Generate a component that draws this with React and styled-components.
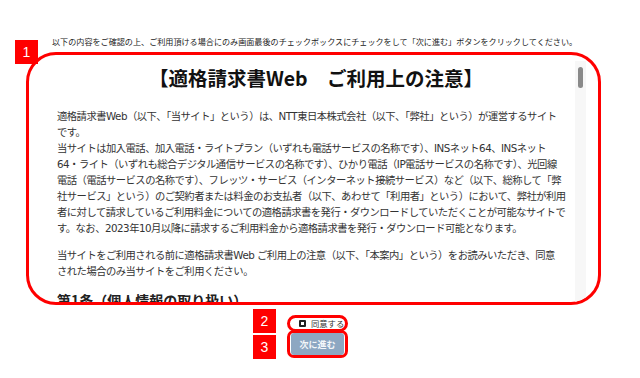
import React from 'react'
import styled, { createGlobalStyle } from 'styled-components'

const GlobalStyle = createGlobalStyle`
  body {
    margin: 0;
    background: #fff;
    font-family: "Noto Sans CJK JP", "Noto Sans", sans-serif;
  }
`

const articles = [
  {
    title: '第1条（個人情報の取り扱い）',
    body: '弊社は、当サイトのご利用にあたり利用者から取得した個人情報を、弊社が別に定める「個人情報保護ポリシー」に基づき適切に取り扱います。弊社は、取得した個人情報を適格請求書の発行・ダウンロードに関する業務の遂行、当サイトの運営および改善、ならびに利用者へのご連絡のために利用します。'
  },
  {
    title: '第2条（ご利用環境）',
    body: '当サイトのご利用にあたっては、弊社が推奨するブラウザおよびOSをご利用ください。推奨環境以外でご利用された場合、画面が正しく表示されない、または一部の機能がご利用いただけない場合があります。'
  },
  {
    title: '第3条（ID・パスワードの管理）',
    body: '利用者は、当サイトのご利用に必要なID・パスワードを自己の責任において管理するものとします。'
  }
]

const App = () => {
  return (
    <Page>
      <GlobalStyle />
      <Intro>
        以下の内容をご確認の上、ご利用頂ける場合にのみ画面最後のチェックボックスにチェックをして「次に進む」ボタンをクリックしてください。
      </Intro>

      <Frame>
        <Scroll>
          <Title>【適格請求書Web　ご利用上の注意】</Title>
          <Para>
            適格請求書Web（以下、「当サイト」という）は、NTT東日本株式会社（以下、「弊社」という）が運営するサイト<br />
            です。<br />
            当サイトは加入電話、加入電話・ライトプラン（いずれも電話サービスの名称です）、INSネット64、INSネット<br />
            64・ライト（いずれも総合デジタル通信サービスの名称です）、ひかり電話（IP電話サービスの名称です）、光回線<br />
            電話（電話サービスの名称です）、フレッツ・サービス（インターネット接続サービス）など（以下、総称して「弊<br />
            社サービス」という）のご契約者または料金のお支払者（以下、あわせて「利用者」という）において、弊社が利用<br />
            者に対して請求しているご利用料金についての適格請求書を発行・ダウンロードしていただくことが可能なサイトで<br />
            す。なお、2023年10月以降に請求するご利用料金から適格請求書を発行・ダウンロード可能となります。
          </Para>
          <Para>
            当サイトをご利用される前に適格請求書Web ご利用上の注意（以下、「本案内」という）をお読みいただき、同意<br />
            された場合のみ当サイトをご利用ください。
          </Para>
          {articles.map(a => (
            <Article key={a.title}>
              <ArticleTitle>{a.title}</ArticleTitle>
              <ArticleBody>{a.body}</ArticleBody>
            </Article>
          ))}
        </Scroll>
        <Track>
          <Thumb />
        </Track>
      </Frame>

      <Footer>
        <Marked $h={17} $r={9} $start>
          <AgreeLabel>
            <Check type="checkbox" />
            同意する
          </AgreeLabel>
        </Marked>
        <Marked $h={28} $r={7} $overlap>
          <NextButton type="button">次に進む</NextButton>
        </Marked>
      </Footer>

      <Badge $x={15} $y={40}>1</Badge>
      <Badge $x={253} $y={309}>2</Badge>
      <Badge $x={253} $y={335}>3</Badge>
    </Page>
  )
}

const Page = styled.div`
position: relative;
width: 640px;
height: 378px;
box-sizing: border-box;
padding-top: 36px;
overflow: hidden;
`
const Intro = styled.p`
margin: 0 0 4px 52px;
font-size: 8.1px;
line-height: 12px;
color: #222;
white-space: nowrap;
`
const Frame = styled.div`
display: flex;
margin-left: 26px;
width: 575px;
height: 253px;
box-sizing: border-box;
border: 3px solid #ff0000;
border-radius: 30px;
padding: 6px 12px 0 16px;
overflow: hidden;
background: #fff;
`
const Scroll = styled.div`
flex: 1;
min-width: 0;
overflow: hidden;
padding-left: 12px;
`
const Track = styled.div`
width: 11px;
flex-shrink: 0;
background: #f7f7f7;
display: flex;
justify-content: center;
`
const Thumb = styled.div`
width: 5px;
height: 21px;
margin-top: 6px;
border-radius: 3px;
background: #8a8a8a;
`
const Title = styled.h1`
margin: 4px 0 17px;
text-align: center;
font-size: 19.5px;
line-height: 26px;
font-weight: bold;
color: #111;
`
const Para = styled.p`
margin: 0 0 11px;
font-family: "DejaVu Sans", "Noto Sans CJK JP", sans-serif;
font-size: 10.3px;
letter-spacing: -0.5px;
line-height: 16px;
color: #333;
white-space: nowrap;
`
const Article = styled.section`
margin-bottom: 12px;
`
const ArticleTitle = styled.h2`
margin: 9px 0 4px;
font-size: 14px;
line-height: 20px;
font-weight: bold;
color: #222;
`
const ArticleBody = styled.p`
margin: 0;
font-size: 10.3px;
letter-spacing: -0.5px;
line-height: 16px;
color: #333;
`
const Footer = styled.div`
display: flex;
flex-direction: column;
align-items: center;
margin-top: 10px;
padding-right: 5px;
`
const Marked = styled.div`
width: 61px;
height: ${p => p.$h}px;
margin-top: ${p => (p.$overlap ? '-2px' : '0')};
padding-left: ${p => (p.$start ? '9px' : '0')};
box-sizing: border-box;
border: 3px solid #ff0000;
border-radius: ${p => p.$r}px;
display: flex;
align-items: center;
justify-content: ${p => (p.$start ? 'flex-start' : 'center')};
`
const AgreeLabel = styled.label`
display: flex;
align-items: center;
gap: 5px;
font-size: 8.3px;
line-height: 11px;
color: #333;
white-space: nowrap;
`
const Check = styled.input`
appearance: none;
margin: 0;
width: 7px;
height: 7px;
box-sizing: border-box;
border: 2px solid #222;
border-radius: 1px;
background: #fff;
`
const NextButton = styled.button`
width: 53px;
height: 22px;
border: none;
border-radius: 3px;
background: #8da7c2;
color: #f4f7fa;
font-family: "Noto Sans CJK JP", sans-serif;
font-size: 9px;
font-weight: bold;
padding: 0;
`
const Badge = styled.div`
position: absolute;
left: ${p => p.$x}px;
top: ${p => p.$y}px;
width: 23px;
height: 24px;
background: #ff0000;
color: #fff;
display: flex;
align-items: center;
justify-content: center;
font-family: "Liberation Sans", Arial, sans-serif;
font-size: 14px;
`

export default App
